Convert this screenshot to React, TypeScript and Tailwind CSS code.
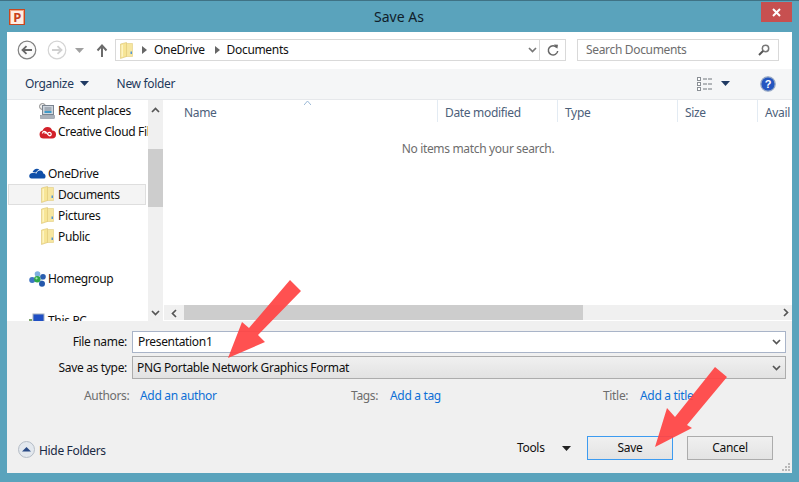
import React from "react";

const Folder = () => (
  <svg width="13" height="17" viewBox="0 0 13 17" className="shrink-0">
    <path d="M5 1.5H12.5V14.5H3Z" fill="#f6e6a0" stroke="#e2cc80" strokeWidth="0.6" />
    <path d="M0.5 2L6.5 0.5V14.5L0.5 16.5Z" fill="#f7e596" stroke="#dcc274" strokeWidth="0.6" />
    <path d="M1.5 3V15L3 14.5V2.7Z" fill="#fdf4c4" />
    <rect x="10.5" y="9.5" width="1.5" height="2.5" fill="#4f94d4" />
  </svg>
);

const Caret = ({ color = "#1f3a63" }: { color?: string }) => (
  <svg width="9" height="5" viewBox="0 0 9 5"><path d="M0 0H9L4.5 5Z" fill={color} /></svg>
);

const Chev = ({ color = "#555" }: { color?: string }) => (
  <svg width="9" height="6" viewBox="0 0 9 6"><path d="M1 1L4.5 4.5L8 1" fill="none" stroke={color} strokeWidth="1.7" /></svg>
);

const Sep = () => (
  <svg width="5" height="8" viewBox="0 0 5 8" className="shrink-0"><path d="M0 0L5 4L0 8Z" fill="#666" /></svg>
);

const NavRow = ({ icon, label, indent, selected }: { icon: React.ReactNode; label: string; indent: string; selected?: boolean }) => (
  <div className={`h-[21px] flex items-center whitespace-nowrap border ${selected ? "border-[#dedede] bg-[#f4f4f4]" : "border-transparent"} ${indent}`}>
    <span className="w-[20px] flex justify-center shrink-0 -ml-[1px]">{icon}</span>
    <span className="ml-[1px] text-[#101010]">{label}</span>
  </div>
);

const Column = ({ label, cls, pad, last }: { label: string; cls: string; pad: string; last?: boolean }) => (
  <div className={`${cls} ${pad} h-[22px] flex items-center pt-[4px] overflow-hidden whitespace-nowrap ${last ? "" : "border-r border-[#e3ebf3]"}`}>{label}</div>
);

export default function App() {
  return (
    <div
      className="relative w-[799px] h-[482px] overflow-hidden bg-[#5aa3bc] border-t border-[#3f7285] text-[12px] tracking-[-0.33px] text-[#1a1a1a]"
      style={{ fontFamily: '"Noto Sans", "Open Sans", sans-serif' }}
    >
      {/* Title bar */}
      <div className="h-[31px] flex items-start relative">
        <div className="ml-[9px] mt-[8px] w-[16px] h-[16px] bg-[#f4a27e] border border-[#c8471f] flex items-center justify-center">
          <span className="text-[#c8401a] font-bold text-[13px] leading-none bg-[#fdeee4] px-[2px]">P</span>
        </div>
        <div className="flex-1 text-center pt-[7px] pl-[12px] text-[14px] tracking-normal leading-[18px] text-[#10202a]">Save As</div>
        <div className="w-[31px] h-[20px] bg-[#c75050] mt-[1px] mr-[7px] flex items-center justify-center">
          <svg width="9" height="9" viewBox="0 0 9 9"><path d="M1 1L8 8M8 1L1 8" stroke="#fff" strokeWidth="2" /></svg>
        </div>
      </div>

      {/* Dialog body */}
      <div className="mx-[7px] h-[441px] bg-white flex flex-col">
        {/* Nav bar */}
        <div className="h-[37px] shrink-0 flex items-center pb-[1px]">
          <svg width="20" height="20" viewBox="0 0 20 20" className="ml-[10px]">
            <circle cx="10" cy="10" r="8.8" fill="#fafafa" stroke="#808080" strokeWidth="1.2" />
            <path d="M15 10H6M9.5 6.2L5.5 10L9.5 13.8" fill="none" stroke="#666" strokeWidth="1.8" />
          </svg>
          <svg width="20" height="20" viewBox="0 0 20 20" className="ml-[10px]">
            <circle cx="10" cy="10" r="8.8" fill="#fff" stroke="#d4d4d4" strokeWidth="1.2" />
            <path d="M5 10H14M10.5 6.2L14.5 10L10.5 13.8" fill="none" stroke="#d0d0d0" strokeWidth="1.8" />
          </svg>
          <span className="ml-[8px] flex"><Caret color="#a0a0a0" /></span>
          <svg width="12" height="13" viewBox="0 0 12 13" className="ml-[12px]">
            <path d="M6 13V2M1.5 6.5L6 1.5L10.5 6.5" fill="none" stroke="#6b6b6b" strokeWidth="2" />
          </svg>
          <div className="ml-[7px] w-[451px] h-[22px] border border-[#d9d9d9] flex items-center">
            <span className="ml-[4px] flex"><Folder /></span>
            <span className="ml-[9px] flex"><Sep /></span>
            <span className="ml-[7px] text-[#111]">OneDrive</span>
            <span className="ml-[10px] flex"><Sep /></span>
            <span className="ml-[7px] text-[#111]">Documents</span>
            <div className="flex-1 flex justify-end pr-[2px]"><Chev color="#777" /></div>
            <div className="w-[26px] h-full border-l border-[#d9d9d9] flex items-center justify-center">
              <svg width="12" height="13" viewBox="0 0 12 13">
                <path d="M9.8 3.5A4.7 4.7 0 1 0 10.7 7" fill="none" stroke="#666" strokeWidth="1.5" />
                <path d="M7 .5L11 .8L10.3 4.8Z" fill="#666" />
              </svg>
            </div>
          </div>
          <div className="ml-[11px] w-[202px] h-[22px] border border-[#d9d9d9] flex items-center pl-[8px] pr-[8px] justify-between text-[#6d6d6d]">
            <span>Search Documents</span>
            <svg width="12" height="12" viewBox="0 0 12 12">
              <circle cx="7.5" cy="4.5" r="3.2" fill="none" stroke="#777" strokeWidth="1.5" />
              <path d="M5 7L1 11" stroke="#555" strokeWidth="2" />
            </svg>
          </div>
        </div>

        {/* Toolbar */}
        <div className="h-[31px] shrink-0 bg-[#f5f6f7] border-b border-[#e6e8eb] flex items-center text-[#1e395b] pb-[1px]">
          <span className="ml-[18px]">Organize</span>
          <span className="ml-[6px] flex"><Caret /></span>
          <span className="ml-[28px]">New folder</span>
          <svg width="16" height="14" viewBox="0 0 16 14" className="ml-auto">
            <g fill="#fff" stroke="#8a8f95"><rect x="0.5" y="0.5" width="3" height="3" /><rect x="0.5" y="5.5" width="3" height="3" /><rect x="0.5" y="10.5" width="3" height="3" /></g>
            <path d="M6 2H15M6 7H15M6 12H15" stroke="#70767d" strokeDasharray="4 1" />
          </svg>
          <span className="ml-[8px] flex"><Caret /></span>
          <svg width="16" height="16" viewBox="0 0 16 16" className="ml-[30px] mr-[16px]">
            <circle cx="8" cy="8" r="7.2" fill="#2456c0" stroke="#96a8c4" strokeWidth="1.3" />
            <text x="8" y="12" fontSize="11" fontWeight="700" textAnchor="middle" fill="#fff" fontFamily="Liberation Sans">?</text>
          </svg>
        </div>

        {/* Main */}
        <div className="h-[221px] shrink-0 flex overflow-hidden">
          {/* Navigation pane */}
          <div className="w-[141px] shrink-0 overflow-hidden pl-[1px] pr-[2px]">
            <NavRow indent="pl-[29px]" label="Recent places" icon={
              <svg width="16" height="16" viewBox="0 0 16 16"><circle cx="3.5" cy="3.5" r="3" fill="#eee" stroke="#8a8a8a" /><rect x="3.5" y="2.5" width="11" height="9" fill="#cfd6de" stroke="#7a8490" /><path d="M5.5 5H12.5M5.5 7H12.5" stroke="#7a8490" /><rect x="5.5" y="8" width="7" height="2" fill="#3f9bc8" /><rect x="1.5" y="12.5" width="14" height="3" fill="#aab1ba" stroke="#7a8490" strokeWidth="0.5" /></svg>
            } />
            <NavRow indent="pl-[29px]" label="Creative Cloud Files" icon={
              <svg width="17" height="14" viewBox="0 0 17 14"><path d="M4.5 13.5a4 4 0 0 1-.8-7.9A5 5 0 0 1 13.2 5.5a4 4 0 0 1-.4 8Z" fill="#d3212a" /><path d="M3.5 8.5a1.8 1.8 0 0 1 1.8-2c1.3 0 2.4 1.3 3.3 2.6 1 1.3 2 2.1 3 1.4 1.1-.8.6-3.2-1-3.2-.8 0-1.3.4-1.9 1.1M7.2 6.7c-.5.5-1 1.2-1.5 1.9" fill="none" stroke="#fff" strokeWidth="1.3" /></svg>
            } />
            <div className="h-[21px]" />
            <NavRow indent="pl-[19px]" label="OneDrive" icon={
              <svg width="17" height="11" viewBox="0 0 17 11"><path d="M3.5 4.2C4.4 1.3 8-.7 10.5 1.8 9 2 7.7 3 7.2 4.6 6 4.3 4.7 4 3.5 4.2Z" fill="#0f4fa8" /><path d="M2.5 10.5C-.8 10.5-.5 5 3.5 5 5 5 6.5 5.2 7.6 5.4 8 3.5 9.5 2.3 11.3 2.5c1.8.2 3 1.5 3 3.1 2.7.3 3.2 4.9.2 4.9Z" fill="#0f4fa8" /></svg>
            } />
            <NavRow indent="pl-[29px]" label="Documents" selected icon={<Folder />} />
            <NavRow indent="pl-[29px]" label="Pictures" icon={<Folder />} />
            <NavRow indent="pl-[29px]" label="Public" icon={<Folder />} />
            <div className="h-[21px]" />
            <NavRow indent="pl-[19px]" label="Homegroup" icon={
              <svg width="17" height="16" viewBox="0 0 17 16"><path d="M3 9L8.5 3L14 6L13 12Z" fill="#cfe0f2" /><circle cx="8.5" cy="3" r="2.8" fill="#7fb0e0" /><circle cx="3.2" cy="9" r="3" fill="#3f74c4" /><circle cx="14" cy="5.8" r="2.8" fill="#2a5fb0" /><circle cx="13" cy="12.8" r="3" fill="#2458ac" /><circle cx="8.3" cy="8.3" r="3.2" fill="#2da84a" /><circle cx="7.5" cy="7.3" r="1.1" fill="#a8e6b4" /></svg>
            } />
            <div className="h-[21px]" />
            <NavRow indent="pl-[19px]" label="This PC" icon={
              <svg width="17" height="15" viewBox="0 0 17 15"><rect x="4" y="1" width="11" height="11" fill="#1f4fc4" stroke="#a4b0c0" /><rect x="0" y="6" width="3" height="7" fill="#7da36a" /></svg>
            } />
          </div>

          {/* Nav scrollbar */}
          <div className="w-[15px] shrink-0 bg-[#f0f0f0] flex flex-col items-center">
            <div className="h-[21px] flex items-center justify-center rotate-180"><Chev /></div>
            <div className="h-[28px]" />
            <div className="w-full h-[58px] bg-[#cdcdcd]" />
            <div className="flex-1" />
            <div className="h-[15px] flex items-center justify-center mb-[1px]"><Chev /></div>
          </div>

          {/* File list */}
          <div className="flex-1 min-w-0 ml-[1px] flex flex-col relative">
            <div className="flex h-[22px] text-[#4c607a] shrink-0">
              <div className="w-[14px]" />
              <Column label="Name" cls="w-[260px]" pad="pl-[6px]" />
              <Column label="Date modified" cls="w-[120px]" pad="pl-[7px]" />
              <Column label="Type" cls="w-[120px]" pad="pl-[7px]" />
              <Column label="Size" cls="w-[80px]" pad="pl-[7px]" />
              <Column label="Avail" cls="flex-1" pad="pl-[7px]" last />
            </div>
            <svg width="7" height="4" viewBox="0 0 7 4" className="absolute left-[140px] top-[1px]">
              <path d="M0 4L3.5 0L7 4" fill="none" stroke="#9ab8d6" />
            </svg>
            <div className="flex-1 text-center pt-[18px] text-[#6d6d6d]">No items match your search.</div>
            <div className="h-[15px] mb-[1px] bg-[#f0f0f0] flex items-center shrink-0">
              <div className="w-[20px] flex justify-center rotate-90"><Chev /></div>
              <div className="w-[399px] h-full bg-[#cdcdcd]" />
              <div className="ml-auto w-[10px] flex justify-center -rotate-90 mr-[1px]"><Chev /></div>
            </div>
          </div>
        </div>

        {/* Bottom panel */}
        <div className="flex-1 bg-[#f0f0f0] relative flex flex-col">
          <div className="h-[10px]" />
          <div className="flex items-center h-[22px]">
            <div className="w-[120px] text-right text-[#101010]">File name:</div>
            <div className="ml-[5px] w-[654px] h-[22px] bg-white border border-[#a9b4c8] flex items-center justify-between pl-[5px] pr-[4px]">
              <span className="text-[#101010]">Presentation1</span><Chev />
            </div>
          </div>
          <div className="flex items-center h-[23px] mt-[3px]">
            <div className="w-[120px] text-right text-[#101010]">Save as type:</div>
            <div className="ml-[5px] w-[654px] h-[23px] bg-gradient-to-b from-[#f0f0f0] to-[#e2e2e2] border border-[#acacac] flex items-center justify-between pl-[4px] pr-[4px]">
              <span className="text-[#101010]">PNG Portable Network Graphics Format</span><Chev />
            </div>
          </div>
          <div className="flex items-center h-[18px] mt-[8px] whitespace-nowrap">
            <span className="ml-[77px] w-[56px] text-[#6d6d6d]">Authors:</span>
            <span className="w-[211px] text-[#0d6fd6]">Add an author</span>
            <span className="w-[39px] text-[#6d6d6d]">Tags:</span>
            <span className="w-[213px] text-[#0d6fd6]">Add a tag</span>
            <span className="w-[37px] text-[#6d6d6d]">Title:</span>
            <span className="text-[#0d6fd6]">Add a title</span>
          </div>
          <div className="flex items-center h-[24px] mt-[31px]">
            <svg width="17" height="17" viewBox="0 0 17 17" className="ml-[11px] relative top-[1px] shrink-0">
              <circle cx="8.5" cy="8.5" r="8" fill="#e3e8ee" stroke="#b4bcc6" />
              <path d="M4 10.5L8.5 6L13 10.5Z" fill="#2a4a86" />
            </svg>
            <span className="ml-[4px] w-[66px] whitespace-nowrap text-[#1a2a44] relative top-[3px]">Hide Folders</span>
            <span className="ml-[412px] w-[29px] text-[#101010]">Tools</span>
            <span className="ml-[16px] flex"><Caret color="#222" /></span>
            <div className="ml-[16px] w-[86px] h-[24px] bg-gradient-to-b from-[#f0f0f0] to-[#e3e3e3] border border-[#3d9bf0] flex items-center justify-center text-[#101010]">Save</div>
            <div className="ml-[14px] w-[86px] h-[24px] bg-gradient-to-b from-[#f0f0f0] to-[#e3e3e3] border border-[#acacac] flex items-center justify-center text-[#101010]">Cancel</div>
          </div>
          {/* Size grip */}
          <svg width="10" height="10" viewBox="0 0 10 10" className="absolute right-[1px] bottom-[1px]">
            <g fill="#b8b8b8"><rect x="7" y="1" width="2" height="2" /><rect x="4" y="4" width="2" height="2" /><rect x="7" y="4" width="2" height="2" /><rect x="1" y="7" width="2" height="2" /><rect x="4" y="7" width="2" height="2" /><rect x="7" y="7" width="2" height="2" /></g>
          </svg>
        </div>
      </div>

      {/* Annotation arrows, drawn over the dialog */}
      <svg width="799" height="482" viewBox="0 0 799 482" className="absolute left-0 -top-[1px] pointer-events-none">
        <path d="M290 280L301 291L258 335L265 342L228 358L242 322L249 328Z" fill="#ff4444" fillOpacity="0.93" />
        <path d="M715 367L727 377L687 425L692 428L655 447L667 408L675 417Z" fill="#ff4444" fillOpacity="0.93" />
      </svg>
    </div>
  );
}
